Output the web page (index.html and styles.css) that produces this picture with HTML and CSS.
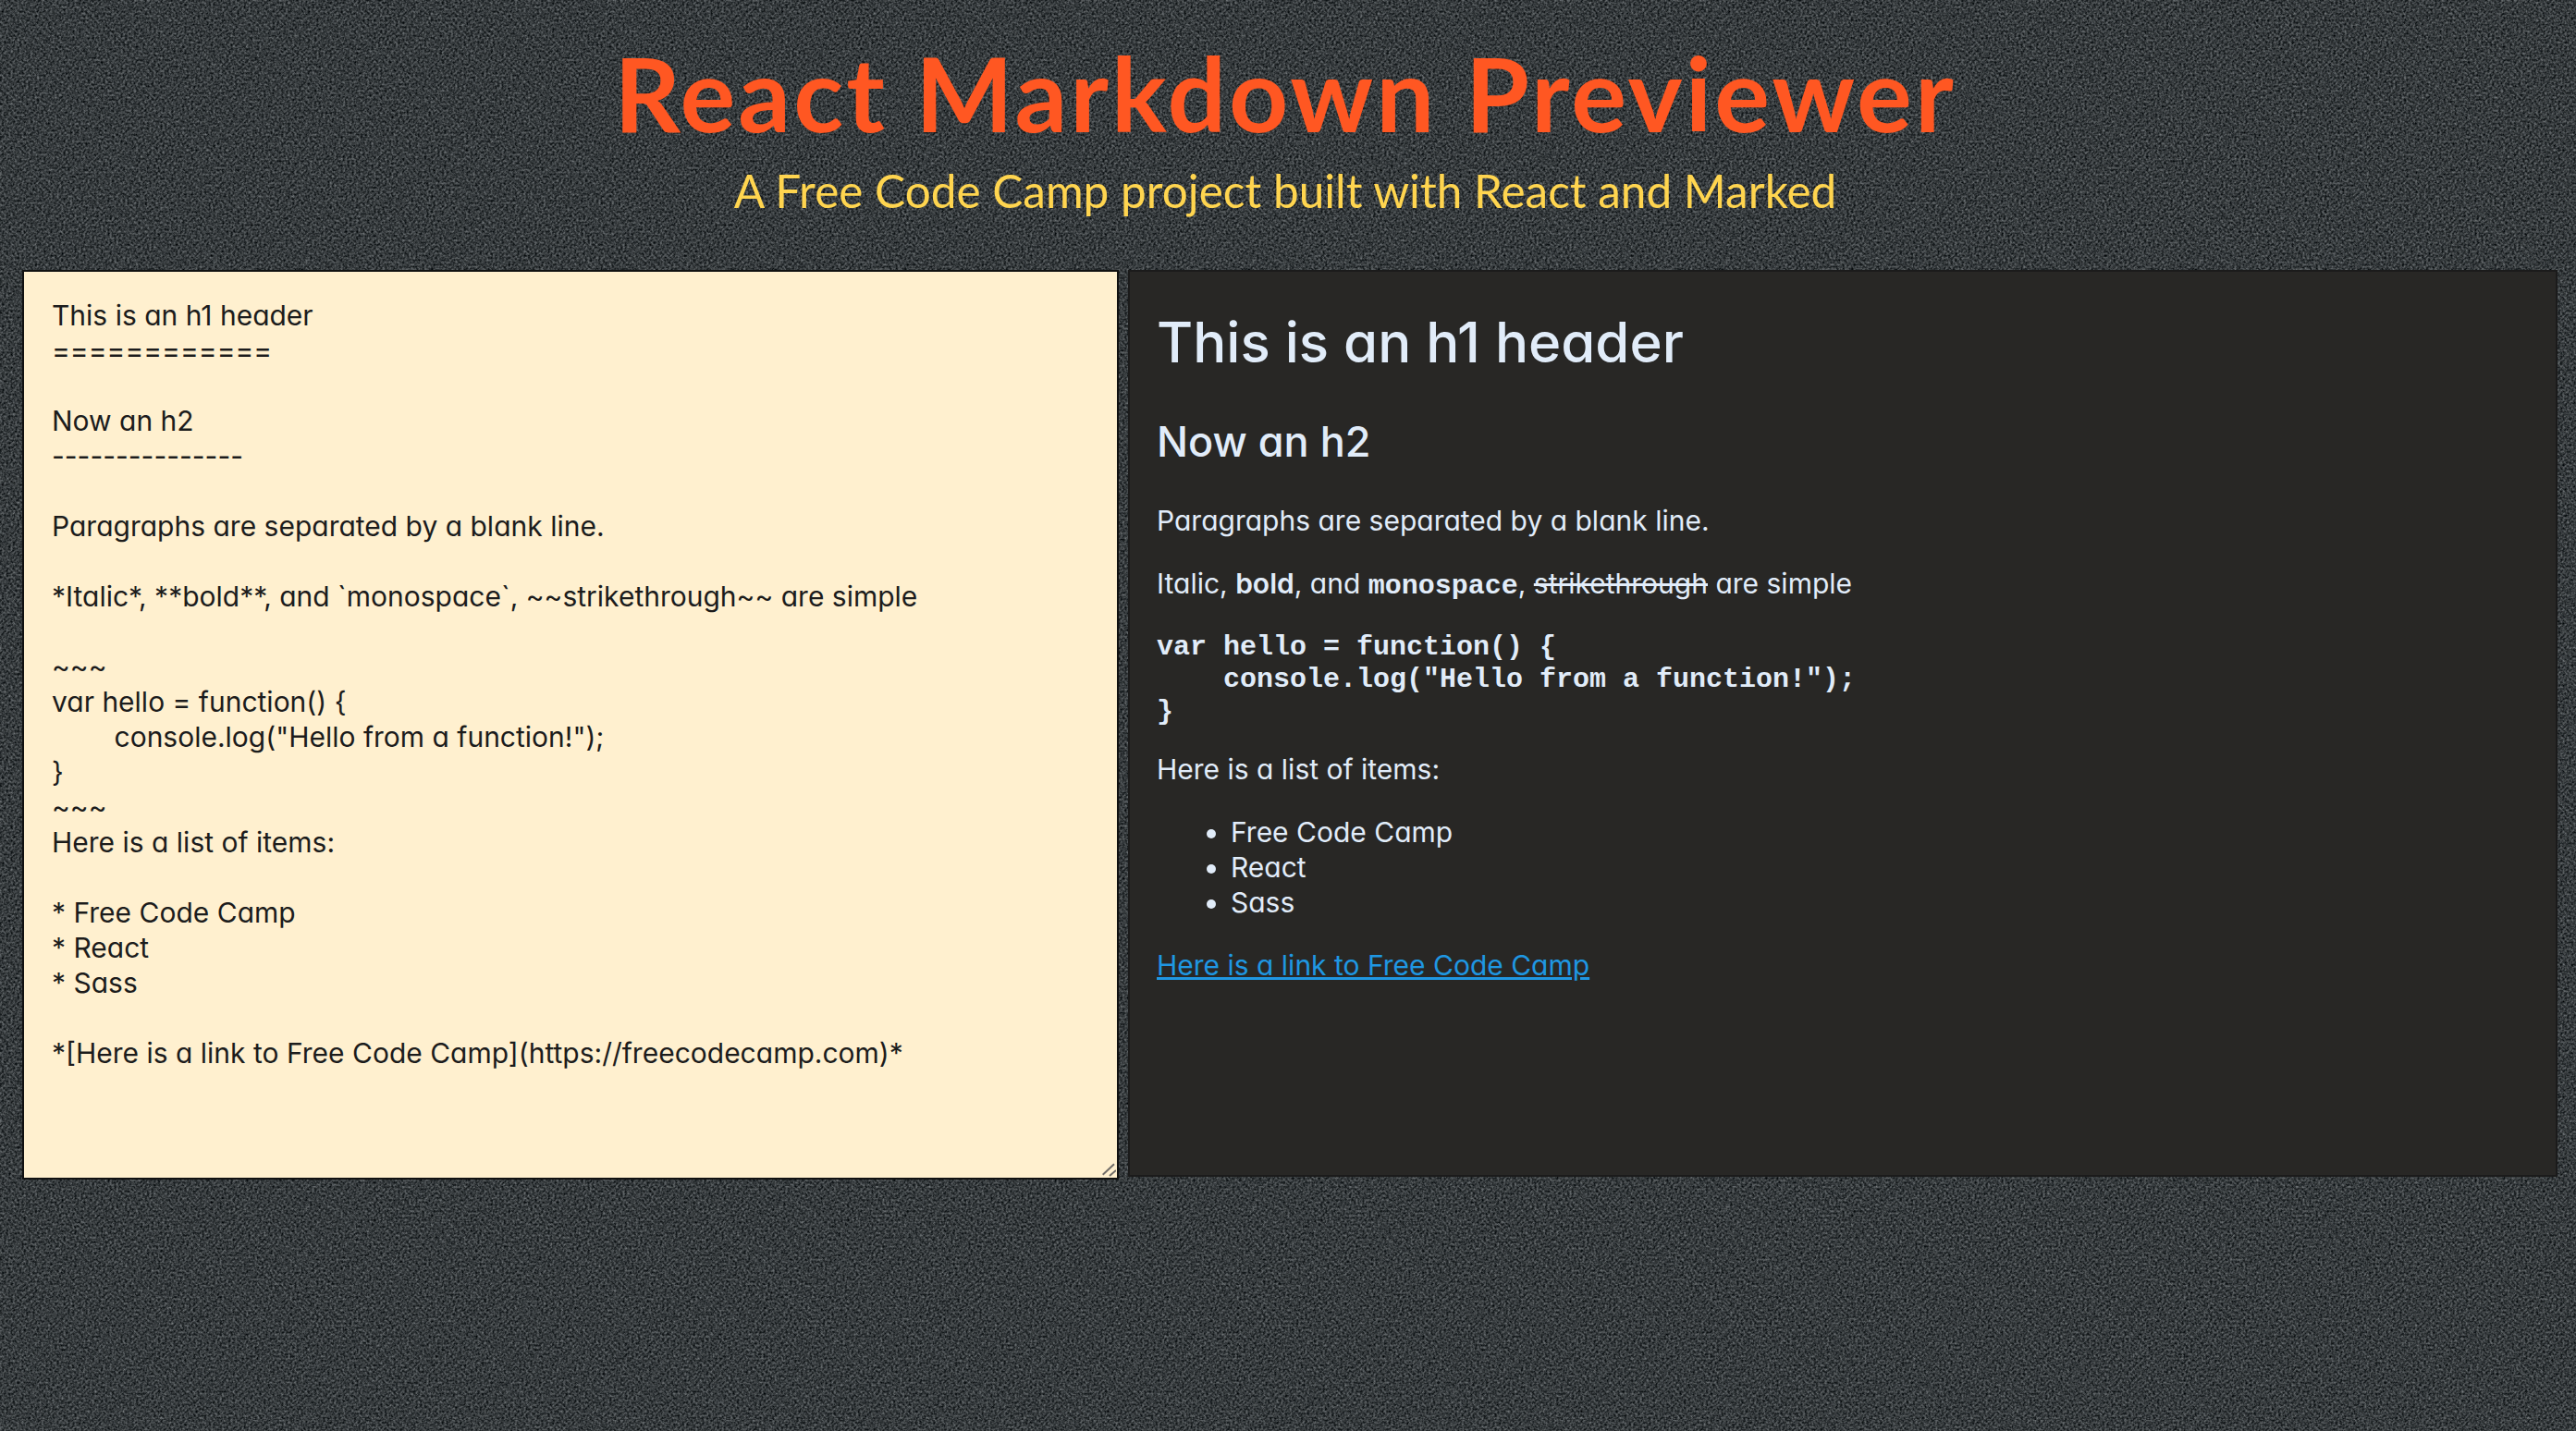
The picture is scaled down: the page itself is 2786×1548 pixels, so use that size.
FILE: index.html

```html
<!doctype html>
<html>
<head>
    <title>React Markdown Previewer</title>
    <link rel="stylesheet" href="styles.css">
    <meta name="viewport" content="width=device-width, initial-scale=1.0">
</head>
<body>
    <header class="header">
        <h1 class="title">React Markdown Previewer</h1>
        <p class="subtitle">A Free Code Camp project built with React and Marked</p>
    </header>
    <main class="panels">
        <div class="editor-wrap">
            <textarea class="editor" spellcheck="false">This is an h1 header
============

Now an h2
---------------

Paragraphs are separated by a blank line.

*Italic*, **bold**, and `monospace`, ~~strikethrough~~ are simple

~~~
var hello = function() {
	console.log("Hello from a function!");
}
~~~
Here is a list of items:

* Free Code Camp
* React
* Sass

*[Here is a link to Free Code Camp](https://freecodecamp.com)*</textarea>
            <svg class="grip" width="16" height="16" viewBox="0 0 16 16">
                <path d="M1.7 13.7L14 2.3M9 15L16 9" stroke="#716d68" stroke-width="2" fill="none"/>
            </svg>
        </div>
        <section class="preview">
            <h1>This is an h1 header</h1>
            <h2>Now an h2</h2>
            <p>Paragraphs are separated by a blank line.</p>
            <p>Italic, <strong>bold</strong>, and <code>monospace</code>, <del>strikethrough</del> are simple</p>
            <pre><code>var hello = function() {
    console.log("Hello from a function!");
}</code></pre>
            <p class="after-code">Here is a list of items:</p>
            <ul>
                <li>Free Code Camp</li>
                <li>React</li>
                <li>Sass</li>
            </ul>
            <p><a href="#">Here is a link to Free Code Camp</a></p>
        </section>
    </main>
</body>
</html>
```

FILE: styles.css

```css
html, body {
    height: 100%;
}
body {
    margin: 0;
    overflow: hidden;
    font-family: "Inter", "Lato", sans-serif;
    font-feature-settings: "cv11" 1;
    font-size: 30px;
    line-height: 38px;
    background-color: #2f3437;
    background-image:
        repeating-linear-gradient(45deg, rgba(0, 0, 0, 0.12) 0, rgba(0, 0, 0, 0.12) 2px, rgba(0, 0, 0, 0) 2px, rgba(0, 0, 0, 0) 5px),
        repeating-linear-gradient(-45deg, rgba(255, 255, 255, 0.03) 0, rgba(255, 255, 255, 0.03) 2px, rgba(255, 255, 255, 0) 2px, rgba(255, 255, 255, 0) 5px),
        url("data:image/svg+xml,%3Csvg xmlns='http://www.w3.org/2000/svg' width='512' height='512'%3E%3Cfilter id='n' color-interpolation-filters='sRGB'%3E%3CfeTurbulence type='fractalNoise' baseFrequency='0.42' numOctaves='2' stitchTiles='stitch'/%3E%3CfeColorMatrix values='0.6 0 0 0 -0.085 0.6 0 0 0 -0.065 0.6 0 0 0 -0.055 0 0 0 0 1'/%3E%3C/filter%3E%3Crect width='512' height='512' filter='url(%23n)'/%3E%3C/svg%3E");
}
.header {
    height: 292px;
    padding-right: 6px;
    text-align: center;
    overflow: hidden;
}
.title {
    margin: 0;
    padding-top: 36px;
    color: #ff5722;
    font-family: "Lato", sans-serif;
    font-size: 112px;
    line-height: 128px;
    font-weight: 700;
    letter-spacing: 3px;
}
.subtitle {
    margin: 0;
    padding-top: 12px;
    color: #ffd54f;
    font-family: "Lato", sans-serif;
    font-size: 49.5px;
    line-height: 60px;
}
.panels {
    display: flex;
    align-items: flex-start;
    gap: 10px;
    padding: 0 20px 0 24px;
}
.editor-wrap {
    position: relative;
    flex: none;
    width: 1186px;
    height: 984px;
}
.editor {
    display: block;
    box-sizing: border-box;
    width: 100%;
    height: 100%;
    padding: 28px 30px;
    border: 2px solid #111;
    background-color: #fff0cf;
    color: #1c1c1c;
    font: inherit;
    font-feature-settings: inherit;
    tab-size: 8;
    resize: none;
    outline: none;
}
.grip {
    position: absolute;
    right: 3px;
    bottom: 3px;
}
.preview {
    box-sizing: border-box;
    flex: 1;
    height: 981px;
    padding: 38px 29px 0;
    border: 2px solid #1b1b1b;
    background-color: #282725;
    color: #e1ecf9;
}
.preview h1 {
    margin: 0 0 40px;
    font-size: 60px;
    line-height: 77px;
    font-weight: 500;
}
.preview h2 {
    margin: 0 0 37px;
    font-size: 45px;
    line-height: 58px;
    font-weight: 500;
}
.preview p {
    margin: 30px 0;
}
.preview .after-code {
    margin-top: 25px;
}
.preview strong {
    font-weight: 600;
}
.preview code {
    font-family: "Liberation Mono", monospace;
    font-size: 30px;
    font-weight: 700;
}
.preview pre {
    margin: 27px 0 25px;
    font-family: "Liberation Mono", monospace;
    font-size: 30px;
    line-height: 35px;
}
.preview ul {
    margin: 29px 0 30px;
    padding-left: 80px;
}
.preview a {
    color: #1f97e2;
}
```
